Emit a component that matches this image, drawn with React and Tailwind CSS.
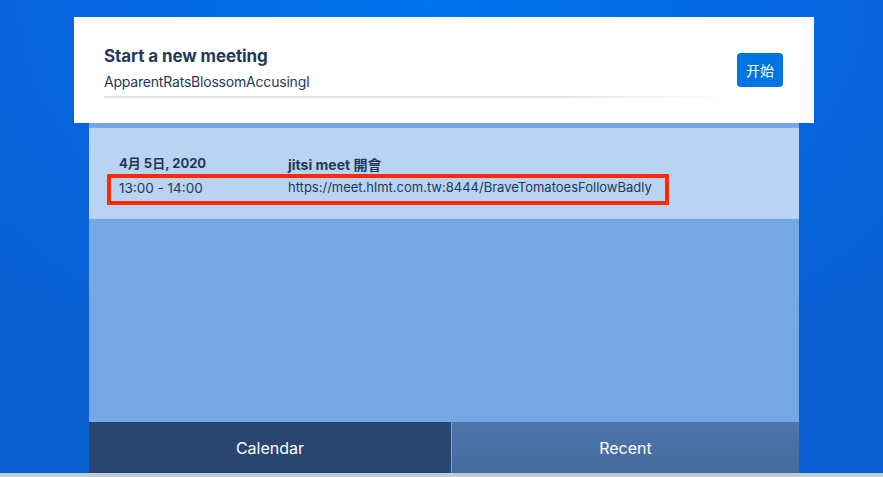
export default function App() {
  const font = { fontFamily: 'Inter, "Noto Sans CJK TC", "Noto Sans CJK SC", sans-serif' };
  return (
    <div
      className="relative w-full h-[477px] overflow-hidden flex flex-col bg-[radial-gradient(ellipse_70%_90%_at_50%_0%,#0074f0_0%,#0566e0_55%,#0a5fd2_100%)]"
      style={font}
    >
      <div className="flex-1 flex flex-col items-center pt-[17px] pl-[5px]">
        <div className="w-[740px] h-[106px] bg-white flex items-center pl-[30px] pr-[31px] relative z-10">
          <div className="flex-1 flex flex-col pt-[3px]">
            <div className="text-[17px] font-bold text-[#253858] leading-[22px] tracking-[-0.1px]">Start a new meeting</div>
            <div className="mt-[6px] text-[14px] text-[#253858] leading-[18px] tracking-[-0.2px] pb-[5px]">ApparentRatsBlossomAccusingI</div>
            <div className="h-[2px] w-[622px] bg-[linear-gradient(to_right,#dfe1e6_70%,#ffffff)]" />
          </div>
          <button className="w-[46px] h-[34px] rounded-[4px] bg-[#0074e0] text-white text-[14px] flex items-center justify-center mt-[0px]">开始</button>
        </div>
        <div className="w-[710px] flex-1 bg-[#75a6e6] flex flex-col">
          <div className="h-[5px]" />
          <div className="h-[91px] bg-[#b9d3f2] flex flex-col pl-[30px] pt-[26px] text-[#253858]">
            <div className="flex items-center h-[20px]">
              <div className="w-[169px] text-[13px] font-bold">4月 5日, 2020</div>
              <div className="text-[14px] font-bold">jitsi meet 開會</div>
            </div>
            <div className="flex items-center h-[20px] mt-[4px]">
              <div className="w-[169px] text-[13.5px]">13:00 - 14:00</div>
              <div className="text-[13px]">https://meet.hlmt.com.tw:8444/BraveTomatoesFollowBadly</div>
            </div>
          </div>
          <div className="flex-1" />
          <div className="h-[51px] flex">
            <div className="w-[362px] bg-[#284670] flex items-center justify-center text-white text-[16px]">Calendar</div>
            <div className="w-px bg-[#7fa3d4]" />
            <div className="flex-1 bg-[linear-gradient(to_bottom,#4c76ab,#46699d)] flex items-center justify-center text-white text-[16px]">Recent</div>
          </div>
        </div>
      </div>
      <div className="h-[4px] bg-[#c3cbd2]" />
      <div className="absolute left-[107px] top-[174px] w-[562px] h-[31px] border-[4px] border-[#ff2a00]" />
    </div>
  );
}
